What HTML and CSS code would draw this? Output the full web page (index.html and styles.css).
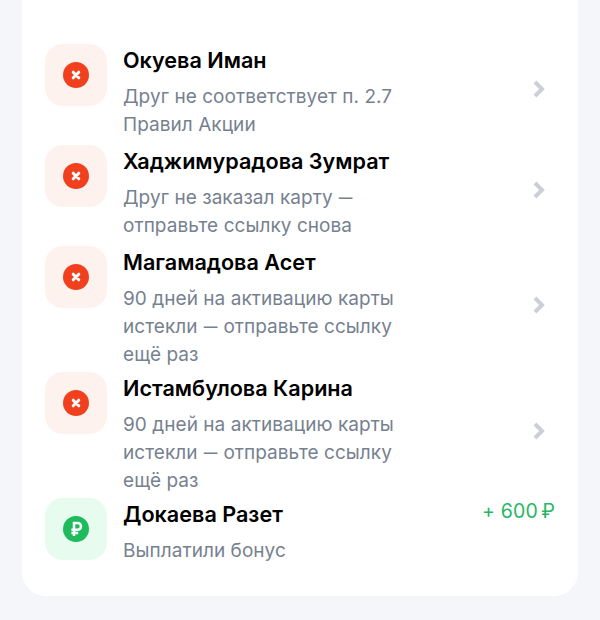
FILE: index.html
```html
<!DOCTYPE html>
<html lang="ru">

<head>
  <meta charset="UTF-8" />
  <title>Друзья</title>
  <link rel="stylesheet" href="styles.css">
</head>

<body>
  <div class="card">
    <div class="row">
      <div class="badge badge-red">
        <svg width="26" height="26" viewBox="0 0 26 26"><circle cx="13" cy="13" r="13" fill="#f0401e"/><path d="M10.2 10.2l5.6 5.6M15.8 10.2l-5.6 5.6" stroke="#fff" stroke-width="3" stroke-linecap="round"/></svg>
      </div>
      <div class="text">
        <div class="name">Окуева Иман</div>
        <div class="note">Друг не соответствует п. 2.7<br>Правил Акции</div>
      </div>
      <svg class="chevron" width="14" height="20" viewBox="0 0 14 20"><path d="M3 3l7 7-7 7" fill="none" stroke="#ccd0d6" stroke-width="4"/></svg>
    </div>

    <div class="row">
      <div class="badge badge-red">
        <svg width="26" height="26" viewBox="0 0 26 26"><circle cx="13" cy="13" r="13" fill="#f0401e"/><path d="M10.2 10.2l5.6 5.6M15.8 10.2l-5.6 5.6" stroke="#fff" stroke-width="3" stroke-linecap="round"/></svg>
      </div>
      <div class="text">
        <div class="name">Хаджимурадова Зумрат</div>
        <div class="note">Друг не заказал карту <span class="dash">—</span><br>отправьте ссылку снова</div>
      </div>
      <svg class="chevron" width="14" height="20" viewBox="0 0 14 20"><path d="M3 3l7 7-7 7" fill="none" stroke="#ccd0d6" stroke-width="4"/></svg>
    </div>

    <div class="row row-long">
      <div class="badge badge-red">
        <svg width="26" height="26" viewBox="0 0 26 26"><circle cx="13" cy="13" r="13" fill="#f0401e"/><path d="M10.2 10.2l5.6 5.6M15.8 10.2l-5.6 5.6" stroke="#fff" stroke-width="3" stroke-linecap="round"/></svg>
      </div>
      <div class="text">
        <div class="name">Магамадова Асет</div>
        <div class="note">90 дней на активацию карты<br>истекли <span class="dash">—</span> отправьте ссылку<br>ещё раз</div>
      </div>
      <svg class="chevron" width="14" height="20" viewBox="0 0 14 20"><path d="M3 3l7 7-7 7" fill="none" stroke="#ccd0d6" stroke-width="4"/></svg>
    </div>

    <div class="row row-long">
      <div class="badge badge-red">
        <svg width="26" height="26" viewBox="0 0 26 26"><circle cx="13" cy="13" r="13" fill="#f0401e"/><path d="M10.2 10.2l5.6 5.6M15.8 10.2l-5.6 5.6" stroke="#fff" stroke-width="3" stroke-linecap="round"/></svg>
      </div>
      <div class="text">
        <div class="name">Истамбулова Карина</div>
        <div class="note">90 дней на активацию карты<br>истекли <span class="dash">—</span> отправьте ссылку<br>ещё раз</div>
      </div>
      <svg class="chevron" width="14" height="20" viewBox="0 0 14 20"><path d="M3 3l7 7-7 7" fill="none" stroke="#ccd0d6" stroke-width="4"/></svg>
    </div>

    <div class="row row-last">
      <div class="badge badge-green">
        <svg width="26" height="26" viewBox="0 0 26 26"><circle cx="13" cy="13" r="13" fill="#1dbb5c"/><path d="M11 20V7h3.6a3.4 3.4 0 0 1 0 6.8H8.4M8.4 16.9h6.8" fill="none" stroke="#fff" stroke-width="2.5"/></svg>
      </div>
      <div class="text">
        <div class="name">Докаева Разет</div>
        <div class="note">Выплатили бонус</div>
      </div>
      <div class="amount">+ 600<span class="rub">₽</span></div>
    </div>
  </div>
</body>

</html>
```

FILE: styles.css
```css
* {
  margin: 0;
  padding: 0;
  box-sizing: border-box;
}

body {
  height: 620px;
  overflow: hidden;
  background-color: #f4f6fa;
  font-family: "Inter", "Noto Sans", sans-serif;
}

/* Card */
.card {
  margin: 0 22px;
  padding: 44px 23px 36px;
  background-color: #fff;
  border-radius: 0 0 24px 24px;
}

.row {
  display: flex;
  align-items: flex-start;
  margin-bottom: 11px;
}

.row-long {
  margin-bottom: 8px;
}

.row-last {
  margin-bottom: 0;
}

.badge {
  flex: none;
  width: 62px;
  height: 62px;
  margin-right: 16px;
  border-radius: 18px;
  display: flex;
  align-items: center;
  justify-content: center;
}

.badge-red {
  background-color: #fef2ef;
}

.badge-green {
  background-color: #e7fbef;
}

.text {
  flex: 1;
}

.name {
  font-size: 21.6px;
  font-weight: 600;
  line-height: 32px;
  color: #000;
}

.note {
  margin-top: 7px;
  margin-bottom: -5px;
  font-size: 19px;
  line-height: 28px;
  letter-spacing: 0.05px;
  color: #76818f;
}

.dash {
  display: inline-block;
  margin: 0 -2px;
  transform: scaleX(0.72);
}

.chevron {
  flex: none;
  align-self: center;
  margin-right: 9px;
}

.amount {
  font-size: 19.5px;
  line-height: 26px;
  letter-spacing: 0.2px;
  color: #27b763;
}

.rub {
  margin-left: 3px;
}
```
